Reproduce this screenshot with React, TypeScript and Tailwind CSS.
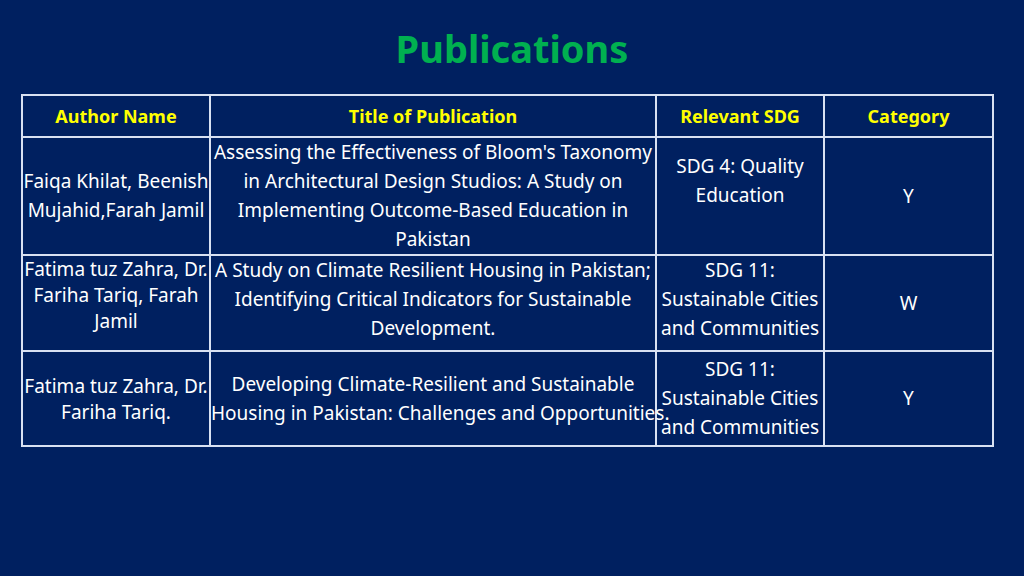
const rows = [
  {
    h: "h-[115px]",
    author: ["Faiqa Khilat, Beenish", "Mujahid,Farah Jamil"],
    authorAlign: "align-middle",
    title: ["Assessing the Effectiveness of Bloom's Taxonomy", "in Architectural Design Studios: A Study on", "Implementing Outcome-Based Education in", "Pakistan"],
    titleAlign: "align-top",
    sdg: ["SDG 4: Quality", "Education"],
    sdgAlign: "align-top pt-[14px]",
    cat: "Y",
  },
  {
    h: "h-[96px]",
    author: ["Fatima tuz Zahra, Dr.", "Fariha Tariq, Farah", "Jamil"],
    authorAlign: "align-top leading-[26px]",
    title: ["A Study on Climate Resilient Housing in Pakistan;", "Identifying Critical Indicators for Sustainable", "Development."],
    titleAlign: "align-top",
    sdg: ["SDG 11:", "Sustainable Cities", "and Communities"],
    sdgAlign: "align-top",
    cat: "W",
  },
  {
    h: "h-[95px]",
    author: ["Fatima tuz Zahra, Dr.", "Fariha Tariq."],
    authorAlign: "align-middle leading-[26px]",
    title: ["Developing Climate-Resilient and Sustainable", "Housing in Pakistan: Challenges and Opportunities."],
    titleAlign: "align-middle",
    sdg: ["SDG 11:", "Sustainable Cities", "and Communities"],
    sdgAlign: "align-middle",
    cat: "Y",
  },
];

const cell = "border-2 border-[#d9e1f2] text-center px-0";

export default function App() {
  return (
    <div className="w-[1024px] h-[576px] bg-[#002060] overflow-hidden font-['Liberation_Serif',serif]">
      <h1 className="text-center text-[38px] font-bold text-[#00b050] pt-[24px] leading-[48px] h-[94px]">
        Publications
      </h1>
      <table className="ml-[21px] w-[971px] table-fixed border-collapse text-white text-[19px] leading-[29px]">
        <colgroup>
          <col className="w-[188px]" />
          <col className="w-[446px]" />
          <col className="w-[168px]" />
          <col className="w-[169px]" />
        </colgroup>
        <thead>
          <tr className="h-[42px] text-[#ffff00] text-[18px] font-bold">
            <th className={cell}>Author Name</th>
            <th className={cell}>Title of Publication</th>
            <th className={cell}>Relevant SDG</th>
            <th className={cell}>Category</th>
          </tr>
        </thead>
        <tbody>
          {rows.map((r, i) => (
            <tr key={i} className={r.h}>
              <td className={`${cell} ${r.authorAlign} whitespace-nowrap`}>
                {r.author.map((l) => <div key={l}>{l}</div>)}
              </td>
              <td className={`${cell} ${r.titleAlign} whitespace-nowrap`}>
                {r.title.map((l) => <div key={l}>{l}</div>)}
              </td>
              <td className={`${cell} ${r.sdgAlign}`}>
                {r.sdg.map((l) => <div key={l}>{l}</div>)}
              </td>
              <td className={`${cell} align-middle`}>{r.cat}</td>
            </tr>
          ))}
        </tbody>
      </table>
    </div>
  );
}
